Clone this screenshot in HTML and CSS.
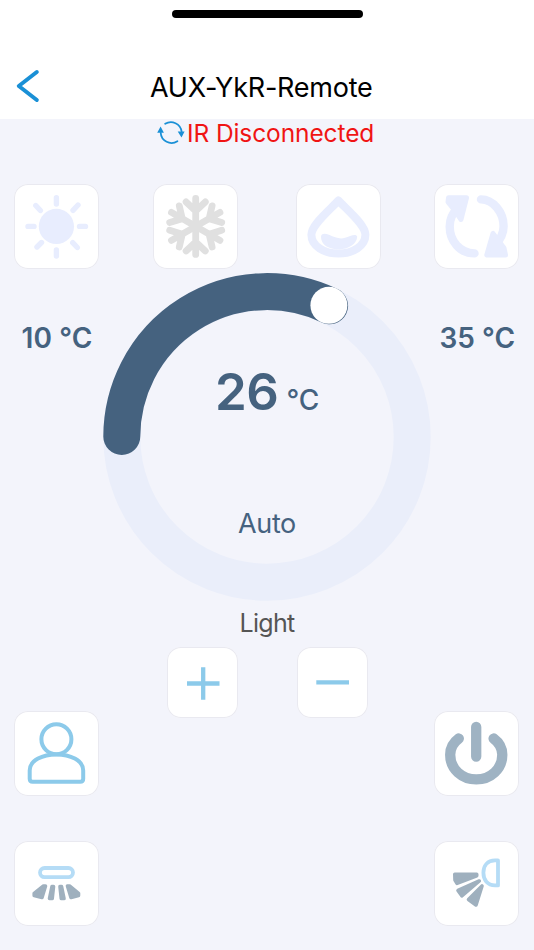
FILE: index.html
```
<!DOCTYPE html>
<html lang="en">
<head>
    <meta charset="UTF-8">
    <title>AUX-YkR-Remote</title>
    <link rel="stylesheet" href="styles.css">
</head>
<body>
    <header class="header">
        <div class="pill"></div>
        <div class="navbar">
            <svg class="back" viewBox="0 0 26 36"><path d="M22.8 4 L4.8 18 L22.8 32"/></svg>
            <h1><span class="title">AUX-YkR-Remote</span></h1>
        </div>
    </header>

    <div class="status">
        <svg class="sync" viewBox="0 0 28 26">
            <path d="M8.2 3.8 A10.8 10.8 0 0 1 24.6 11.5 M20.4 21.2 A10.8 10.8 0 0 1 3.7 12.8"/>
            <path class="head" d="M20.7 11.5 H27.6 L24.5 17.4 Z M.2 12.8 H6.9 L3.6 6.4 Z"/>
        </svg>
        <span class="status-text">IR Disconnected</span>
    </div>

    <!-- modes -->
    <div class="modes">
        <button class="tile sun">
            <svg viewBox="0 0 85 85">
                <circle cx="42.4" cy="42.4" r="17.6"/>
                <path d="M42.4 13.8V20 M42.4 66V72 M14 42.4H20 M65.5 42.4H71.5 M21.8 21.5L26.4 26.5 M64 21L59 26.3 M23 63L27.5 58.5 M63.3 63.5L58.7 58.7"/>
            </svg>
        </button>
        <button class="tile snow">
            <svg viewBox="0 0 85 85">
                <defs><path id="arm" d="M0 0V-28 M-9.6 -24.5L0 -15.5L9.6 -24.5"/></defs>
                <g transform="translate(42.7 42.4)">
                    <use href="#arm"/>
                    <use href="#arm" transform="rotate(60)"/>
                    <use href="#arm" transform="rotate(120)"/>
                    <use href="#arm" transform="rotate(180)"/>
                    <use href="#arm" transform="rotate(240)"/>
                    <use href="#arm" transform="rotate(300)"/>
                </g>
            </svg>
        </button>
        <button class="tile drop">
            <svg viewBox="0 0 85 85">
                <path class="outline" d="M42.4 16.5 C35 25 15.4 40.5 15.4 50.8 C15.4 62 28 69.6 42.4 69.6 C57 69.6 69.4 62 69.4 50.8 C69.4 40.5 50 25 42.4 16.5Z"/>
                <path class="water" d="M25 53 C25 49 29 49 33 50.8 C39 53.5 44 55.5 49 53.8 C54 52 60.5 49 61.2 52.8 C61 60 52 65.4 43 65.4 C33 65.4 25 61 25 53Z"/>
            </svg>
        </button>
        <button class="tile cycle">
            <svg viewBox="0 0 85 85">
                <path class="line" d="M40.5 69.4 C26 69.4 15.7 57 15.7 42.5 C15.7 35 19 28.5 24 24"/>
                <path class="line" d="M47 15.4 C59 15.4 69.6 28 69.6 42.3 C69.6 50 66 56 61 61"/>
                <path class="head" d="M14.5 13.8H32.5L27 35.5L22 28L14 18Z M52.8 71H71.5L70 64L59 49.5Z"/>
            </svg>
        </button>
    </div>

    <div class="dial-row">
        <div class="limit"><span class="min">10 °C</span></div>
        <div class="dial">
            <svg class="ring" viewBox="0 0 328 328">
                <circle class="track" cx="164" cy="164" r="145.2"/>
                <path class="value" d="M18.8 163.5 A145.2 145.2 0 0 1 226.6 32.8"/>
                <circle class="knob" cx="225.9" cy="32.3" r="18.5"/>
            </svg>
            <div class="reading">
                <div class="temp"><span class="degrees">26</span><span class="unit">°C</span></div>
                <div class="mode-name">Auto</div>
            </div>
        </div>
        <div class="limit"><span class="max">35 °C</span></div>
    </div>

    <div class="light">Light</div>
    <div class="steps">
        <button class="tile small"><svg viewBox="0 0 71 71"><path d="M20 36.5H52.5 M36.2 20.3V52.8"/></svg></button>
        <button class="tile small"><svg viewBox="0 0 71 71"><path d="M19.3 35.3H52"/></svg></button>
    </div>

    <div class="actions">
        <button class="tile person">
            <svg viewBox="0 0 85 85">
                <circle cx="42.4" cy="28.2" r="15"/>
                <path d="M15.7 59.5 C15.7 49 29 43.5 42.4 43.5 S69.2 49 69.2 59.5 V67.8 Q69.2 70.8 66.2 70.8 H18.7 Q15.7 70.8 15.7 67.8Z"/>
            </svg>
        </button>
        <button class="tile power">
            <svg viewBox="0 0 85 85">
                <path d="M42.2 16V45.5 M24.8 27.5 C19.3 31.5 16.2 37 16.2 43.8 C16.2 58 28 68.4 42.3 68.4 C56.5 68.4 68.3 58 68.3 43.8 C68.3 37 65 31.5 59.6 27.5"/>
            </svg>
        </button>
    </div>

    <div class="actions swing">
        <button class="tile vent">
            <svg viewBox="0 0 85 85">
                <rect class="unit-body" x="26" y="27" width="33" height="9.2" rx="4.6"/>
                <path class="blades" d="M29.5 45H31.5L28 56.5L20.2 54.5V52.3Z M38 45.5H39.5L38.2 57.5H35.5Z M46 45.5H47.5L50 57.5H47.3Z M53.5 45H55.5L64.5 52.3V54.5L57 56.5Z"/>
            </svg>
        </button>
        <button class="tile vent">
            <svg viewBox="0 0 85 85">
                <path class="unit-body" d="M64 19.4V44.4H61C53.5 44.4 49.4 39 49.4 31.8S53.5 19.4 61 19.4Z"/>
                <path class="blades" d="M20.8 33.3H42.7V34.8L23 42.3L21 39Z M45.3 40L27.8 54.8L24 49.5Z M48 45L42 64L34.5 58.5Z"/>
            </svg>
        </button>
    </div>
</body>
</html>
```
FILE: styles.css
```
* {
    box-sizing: border-box;
}

body {
    margin: 0;
    width: 534px;
    height: 950px;
    overflow: hidden;
    background-color: #f3f4fb;
    font-family: Inter, sans-serif;
    color: #45627f;
}

svg {
    display: block;
    fill: none;
    stroke-linecap: round;
    stroke-linejoin: round;
}

span {
    white-space: nowrap;
}

.header {
    height: 118.5px;
    padding-top: 10px;
    background-color: #fff;
}

.pill {
    width: 191px;
    height: 7.5px;
    margin: 0 auto;
    border-radius: 4px;
    background-color: #000;
}

.navbar {
    display: grid;
    grid-template-columns: 40px 1fr;
    align-items: center;
    margin-top: 50px;
    height: 40px;
}

.back {
    width: 26px;
    height: 36px;
    margin: -4px 0 0 14px;
    stroke: #1a90d6;
    stroke-width: 4;
}

h1 {
    margin: 0;
    padding-left: 110px;
    color: #000;
    font-size: 27px;
    font-weight: 400;
    line-height: 40px;
}

.title {
    letter-spacing: -0.23px;
}

.status {
    display: flex;
    align-items: center;
    height: 29px;
    padding-left: 157px;
    color: #f01414;
    font-size: 24.5px;
    line-height: 29px;
}

.sync {
    width: 28px;
    height: 26px;
    margin-right: 2px;
    stroke: #1a90d6;
    stroke-width: 1.8;
}

.sync .head {
    fill: #1a90d6;
    stroke: none;
}

.status-text {
    letter-spacing: -0.1px;
}

.modes {
    display: flex;
    margin-top: 36.5px;
    padding-left: 14.4px;
}

.tile {
    flex: none;
    width: 85px;
    height: 85px;
    padding: 0;
    border: 0;
    border-radius: 14px;
    background-color: #fff;
    box-shadow: inset 0 0 0 1px #e9e9f0;
}

.snow {
    margin-left: 54px;
}

.drop {
    margin-left: 58px;
}

.cycle {
    margin-left: 53px;
}

.sun svg {
    fill: #e8edfe;
    stroke: #e8edfe;
    stroke-width: 5.4;
}

.sun circle {
    stroke: none;
}

.snow svg {
    stroke: #e0e0e0;
    stroke-width: 6.8;
}

.drop .outline {
    stroke: #e8edfe;
    stroke-width: 8;
}

.drop .water {
    fill: #e8edfe;
}

.cycle svg {
    stroke: #e8edfe;
    stroke-width: 8.4;
}

.cycle .head {
    fill: #e8edfe;
    stroke-width: 5;
}

.dial-row {
    display: grid;
    grid-template-columns: 103px 328px 103px;
    margin-top: 3.5px;
}

.limit {
    padding-top: 50px;
    font-size: 28px;
    font-weight: 600;
    line-height: 30px;
}

.min {
    margin-left: 21.5px;
    letter-spacing: 0.1px;
}

.max {
    margin-left: 8.5px;
    letter-spacing: 0;
}

.dial {
    display: grid;
}

.ring,
.reading {
    grid-area: 1 / 1;
}

.ring {
    width: 328px;
    height: 328px;
}

.track {
    stroke: #eaeefa;
    stroke-width: 37;
}

.value {
    stroke: #45627f;
    stroke-width: 37;
}

.knob {
    fill: #fff;
}

.reading {
    padding-top: 89px;
}

.temp {
    display: flex;
    align-items: baseline;
    height: 60px;
    padding-left: 112px;
    line-height: 60px;
}

.degrees {
    font-size: 51px;
    font-weight: 600;
    letter-spacing: -0.5px;
}

.unit {
    margin-left: 8px;
    font-size: 28px;
    font-weight: 500;
}

.mode-name {
    margin-top: 86px;
    font-size: 27px;
    letter-spacing: -0.4px;
    line-height: 32px;
    text-align: center;
}

.light {
    margin-top: 6px;
    height: 32px;
    color: #555;
    font-size: 25px;
    letter-spacing: -0.7px;
    line-height: 32px;
    text-align: center;
}

.steps {
    display: flex;
    gap: 59px;
    margin-top: 8px;
    padding-left: 167px;
}

.small {
    width: 71px;
    height: 71px;
}

.small svg {
    stroke: #8ccaea;
    stroke-width: 4.3;
    stroke-linecap: butt;
}

.actions {
    display: flex;
    justify-content: space-between;
    margin-top: -7px;
    padding: 0 15.2px 0 14.4px;
}

.swing {
    margin-top: 45px;
}

.person svg {
    stroke: #8ccaea;
    stroke-width: 4;
}

.power svg {
    stroke: #9fb3c3;
    stroke-width: 10.3;
}

.unit-body {
    stroke: #b5dcf6;
    stroke-width: 3.8;
}

.blades {
    fill: #9fb0be;
    stroke: #9fb0be;
    stroke-width: 3.6;
}
```
